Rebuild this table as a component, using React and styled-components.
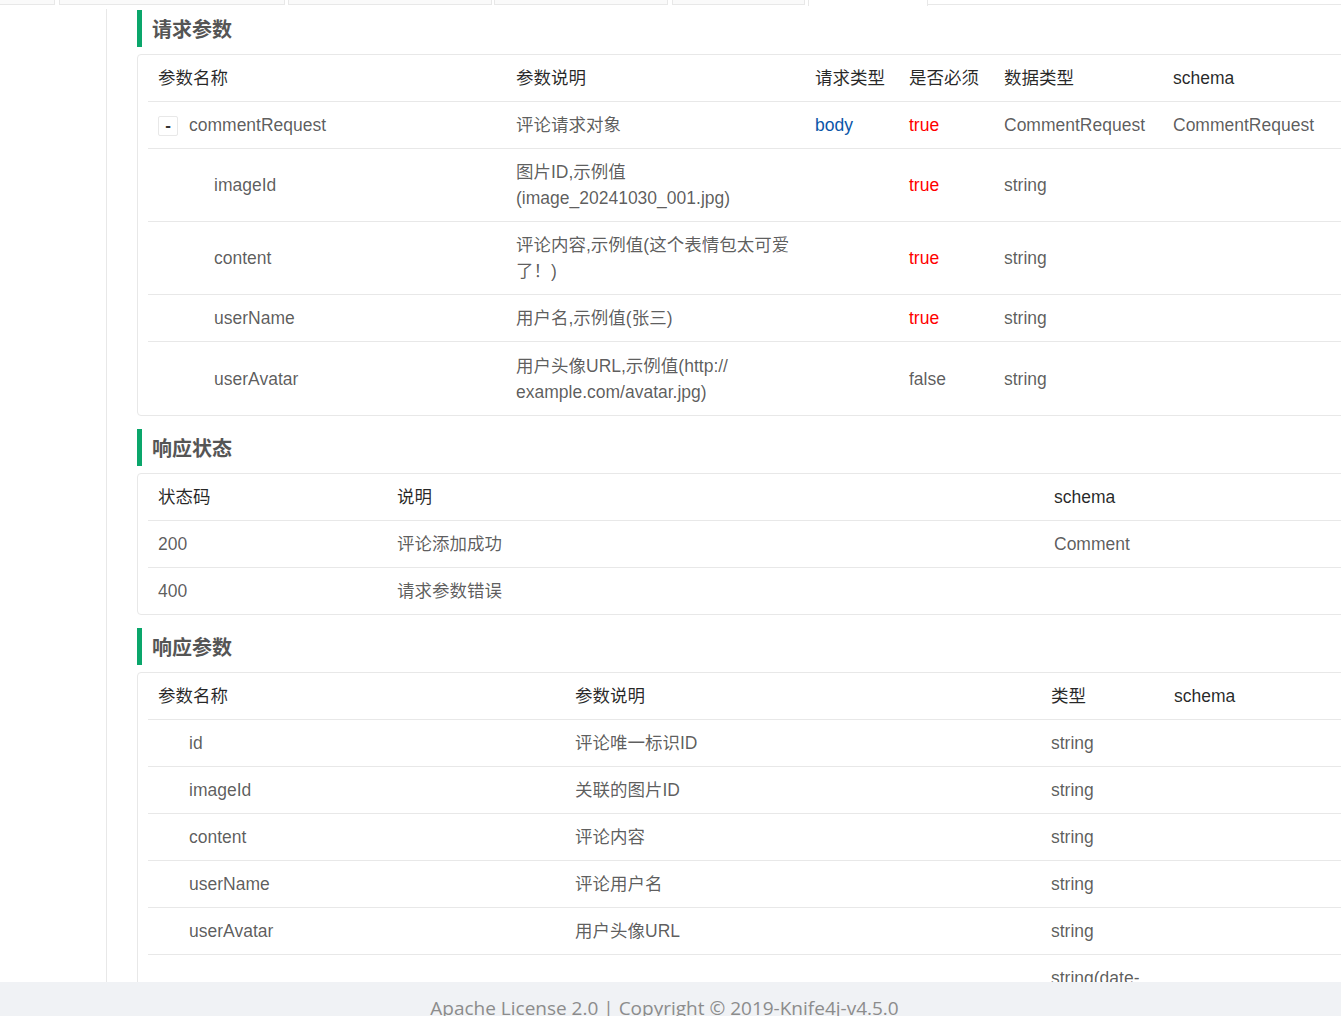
import React from "react";
import styled, { createGlobalStyle } from "styled-components";

const GlobalStyle = createGlobalStyle`
  html, body {
    margin: 0;
    padding: 0;
    height: 100%;
    overflow: hidden;
    background: #fff;
  }
  body {
    font-family: "Liberation Sans", Arial, "Noto Sans CJK SC", sans-serif;
  }
`;

const Page = styled.div`
  display: flex;
  flex-direction: column;
  height: 1016px;
`;

const TabBar = styled.div`
  display: flex;
  height: 6px;
  flex-shrink: 0;
  overflow: hidden;
`;

const Tab = styled.div`
  flex: 0 0 ${p => p.$w}px;
  margin-left: ${p => p.$gap}px;
  box-sizing: border-box;
  height: ${p => (p.$active ? 6 : 5)}px;
  background: ${p => (p.$active ? "#fff" : "#fafafa")};
  border: 1px solid #e8e8e8;
  border-top: none;
  ${p => p.$active && "border-bottom: none;"}
`;

const TabRest = styled.div`
  flex: 1;
  height: 5px;
  box-sizing: border-box;
  border-bottom: 1px solid #e8e8e8;
`;

const Main = styled.div`
  flex: 1;
  display: flex;
  min-height: 0;
  overflow: hidden;
`;

const Sidebar = styled.aside`
  flex: 0 0 107px;
  box-sizing: border-box;
  margin-top: 3px;
  border-right: 1px solid #e8e8e8;
`;

const Content = styled.main`
  flex: 1;
  min-width: 0;
  padding: 4px 0 0 30px;
`;

const Section = styled.section`
  & + & {
    margin-top: 13px;
  }
`;

const SectionTitle = styled.h3`
  margin: 0 0 7px;
  height: 37px;
  box-sizing: border-box;
  padding: 2px 0 0 10px;
  line-height: 37px;
  border-left: 5px solid #0aa66b;
  font-size: 20px;
  font-weight: bold;
  color: #555;
`;

const Card = styled.div`
  width: 1280px;
  border: 1px solid #e8e8e8;
  border-radius: 4px;
  padding: 0 10px;
  background: #fff;
`;

const Table = styled.table`
  width: 100%;
  table-layout: fixed;
  border-collapse: separate;
  border-spacing: 0;
  font-size: 17.5px;
  line-height: 26px;

  tbody tr:last-child td {
    border-bottom: ${p => (p.$openEnd ? "1px solid #e8e8e8" : "none")};
  }
`;

const Th = styled.th`
  text-align: left;
  font-weight: normal;
  color: rgba(0, 0, 0, 0.85);
  padding: 10.06px 10px;
  border-bottom: 1px solid #e8e8e8;
`;

const Td = styled.td`
  padding: 10.06px 10px;
  padding-left: ${p => 10 + (p.$indent || 0)}px;
  color: ${p => p.$color || "rgba(0, 0, 0, 0.65)"};
  vertical-align: middle;
  border-bottom: 1px solid #e8e8e8;
`;

const Toggle = styled.span`
  display: inline-block;
  box-sizing: border-box;
  width: 20px;
  height: 20px;
  margin: 4px 11px 0 0;
  border: 1px solid #e8e8e8;
  border-radius: 2px;
  vertical-align: top;
  text-align: center;
  font-size: 17px;
  font-weight: bold;
  line-height: 17px;
  color: #333;
  background: #fff;
`;

const Footer = styled.footer`
  flex: 0 0 34px;
  box-sizing: border-box;
  background: #f0f2f5;
  text-align: center;
  padding: 12px 12px 0 0;
  font-family: "Open Sans", "Noto Sans", sans-serif;
  font-size: 19px;
  line-height: 28px;
  color: #8c8c8c;
  overflow: hidden;
  white-space: nowrap;
`;

const tabs = [
  { l: -10, r: 55 },
  { l: 59, r: 285 },
  { l: 288, r: 492 },
  { l: 494, r: 668 },
  { l: 672, r: 805 },
  { l: 808, r: 928, active: true }
];

const requestCols = [358, 299, 94, 95, 169, null];
const requestHead = ["参数名称", "参数说明", "请求类型", "是否必须", "数据类型", "schema"];
const requestRows = [
  { name: "commentRequest", toggle: true, desc: "评论请求对象", in: "body", required: true, type: "CommentRequest", schema: "CommentRequest" },
  { name: "imageId", indent: 56, desc: "图片ID,示例值(image_20241030_001.jpg)", required: true, type: "string" },
  { name: "content", indent: 56, desc: "评论内容,示例值(这个表情包太可爱了！)", required: true, type: "string" },
  { name: "userName", indent: 56, desc: "用户名,示例值(张三)", required: true, type: "string" },
  { name: "userAvatar", indent: 56, desc: "用户头像URL,示例值(http://\u200Bexample.com/avatar.jpg)", required: false, type: "string" }
];

const statusCols = [239, 657, null];
const statusRows = [
  { code: "200", desc: "评论添加成功", schema: "Comment" },
  { code: "400", desc: "请求参数错误", schema: "" }
];

const responseCols = [417, 476, 123, null];
const responseRows = [
  { name: "id", desc: "评论唯一标识ID", type: "string" },
  { name: "imageId", desc: "关联的图片ID", type: "string" },
  { name: "content", desc: "评论内容", type: "string" },
  { name: "userName", desc: "评论用户名", type: "string" },
  { name: "userAvatar", desc: "用户头像URL", type: "string" },
  { name: "createTime", desc: "评论创建时间", type: "string(date-time)" }
];

const Cols = ({ widths }) => (
  <colgroup>
    {widths.map((w, i) => (
      <col key={i} style={w ? { width: w } : undefined} />
    ))}
  </colgroup>
);

const Head = ({ labels }) => (
  <thead>
    <tr>
      {labels.map(l => (
        <Th key={l}>{l}</Th>
      ))}
    </tr>
  </thead>
);

export default function App() {
  let prev = 0;
  return (
    <Page>
      <GlobalStyle />
      <TabBar>
        {tabs.map((t, i) => {
          const gap = i === 0 ? t.l : t.l - prev;
          prev = t.r;
          return <Tab key={i} $w={t.r - t.l} $gap={gap} $active={t.active} />;
        })}
        <TabRest />
      </TabBar>

      <Main>
        <Sidebar />
        <Content>
          <Section>
            <SectionTitle>请求参数</SectionTitle>
            <Card>
              <Table>
                <Cols widths={requestCols} />
                <Head labels={requestHead} />
                <tbody>
                  {requestRows.map(r => (
                    <tr key={r.name}>
                      <Td $indent={r.indent}>
                        {r.toggle && <Toggle>-</Toggle>}
                        {r.name}
                      </Td>
                      <Td>{r.desc}</Td>
                      <Td $color="#0b56a8">{r.in}</Td>
                      <Td $color={r.required ? "#ff0000" : undefined}>
                        {r.required ? "true" : "false"}
                      </Td>
                      <Td>{r.type}</Td>
                      <Td>{r.schema}</Td>
                    </tr>
                  ))}
                </tbody>
              </Table>
            </Card>
          </Section>

          <Section>
            <SectionTitle>响应状态</SectionTitle>
            <Card>
              <Table>
                <Cols widths={statusCols} />
                <Head labels={["状态码", "说明", "schema"]} />
                <tbody>
                  {statusRows.map(r => (
                    <tr key={r.code}>
                      <Td>{r.code}</Td>
                      <Td>{r.desc}</Td>
                      <Td>{r.schema}</Td>
                    </tr>
                  ))}
                </tbody>
              </Table>
            </Card>
          </Section>

          <Section>
            <SectionTitle>响应参数</SectionTitle>
            <Card>
              <Table $openEnd>
                <Cols widths={responseCols} />
                <Head labels={["参数名称", "参数说明", "类型", "schema"]} />
                <tbody>
                  {responseRows.map(r => (
                    <tr key={r.name}>
                      <Td $indent={31}>{r.name}</Td>
                      <Td>{r.desc}</Td>
                      <Td>{r.type}</Td>
                      <Td />
                    </tr>
                  ))}
                </tbody>
              </Table>
            </Card>
          </Section>
        </Content>
      </Main>

      <Footer>Apache License 2.0 | Copyright © 2019-Knife4j-v4.5.0</Footer>
    </Page>
  );
}
